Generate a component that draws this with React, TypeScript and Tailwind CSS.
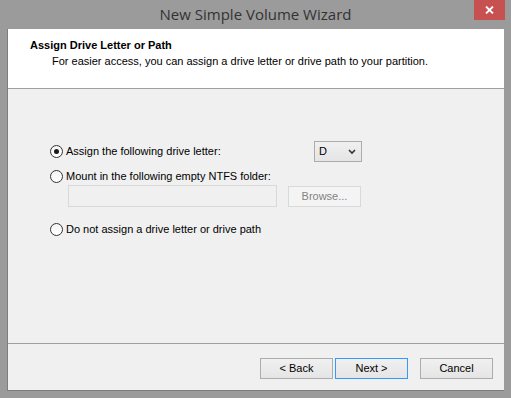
import React from "react";

function Radio({ checked }: { checked?: boolean }) {
  return (
    <span className="flex h-[13px] w-[13px] shrink-0 items-center justify-center rounded-full border border-[#333333] bg-gradient-to-b from-[#f4f4f4] to-[#ffffff]">
      {checked && <span className="h-[5px] w-[5px] rounded-full bg-[#1a1a1a]" />}
    </span>
  );
}

function Button({ label, focused, className }: { label: string; focused?: boolean; className?: string }) {
  return (
    <button
      className={
        "block h-[21px] w-[73px] border bg-gradient-to-b from-[#f0f0f0] to-[#e5e5e5] text-[11px] leading-[13px] text-black " +
        (focused ? "border-[#3399ff] " : "border-[#acacac] ") +
        (className ?? "")
      }
    >
      {label}
    </button>
  );
}

export default function App() {
  return (
    <div className="relative h-[398px] w-[511px] overflow-hidden bg-[#9b9b9b] font-['Liberation_Sans',Arial,sans-serif]">
      {/* title bar */}
      <div className="flex h-[29px] items-center justify-center">
        <span className="font-['Open_Sans',sans-serif] text-[15px] text-[#333333]">New Simple Volume Wizard</span>
      </div>
      <div className="absolute right-[6px] top-0 flex h-[20px] w-[31px] items-center justify-center bg-[#c75050]">
        <svg width="9" height="8" viewBox="0 0 9 8">
          <path d="M1 0.5 L8 7.5 M8 0.5 L1 7.5" stroke="white" strokeWidth="1.8" />
        </svg>
      </div>

      {/* client */}
      <div className="ml-[7px] flex h-[362px] w-[497px] flex-col border-l border-b border-[#7d7d7d] bg-[#f0f0f0]">
        <div className="h-[60px] border-b border-[#a0a0a0] bg-white pl-[22px] pt-[10px]">
          <div className="text-[11px] font-bold leading-[13px] text-black">Assign Drive Letter or Path</div>
          <div className="mt-[3px] pl-[22px] text-[11px] leading-[13px] text-black">
            For easier access, you can assign a drive letter or drive path to your partition.
          </div>
        </div>

        <div className="flex h-[254px] flex-col pl-[42px] pt-[52px] text-[11px] leading-[13px] text-black">
          <div className="flex h-[21px] items-center">
            <div className="flex w-[264px] items-center gap-[3px]">
              <Radio checked />
              <span>Assign the following drive letter:</span>
            </div>
            <div className="flex h-[21px] w-[48px] items-center justify-between border border-[#acacac] bg-gradient-to-b from-[#f0f0f0] to-[#e5e5e5] pl-[4px] pr-[5px]">
              <span>D</span>
              <svg width="8" height="6" viewBox="0 0 8 6">
                <path d="M1 1 L4 4 L7 1" stroke="#333" strokeWidth="1.6" fill="none" />
              </svg>
            </div>
          </div>

          <div className="mt-[8px] flex h-[13px] items-center gap-[3px]">
            <Radio />
            <span>Mount in the following empty NTFS folder:</span>
          </div>

          <div className="ml-[18px] mt-[2px] flex items-start gap-[11px]">
            <div className="h-[22px] w-[209px] border border-[#d9d9d9] bg-[#f0f0f0]" />
            <button className="mt-[1px] block h-[21px] w-[73px] border border-[#d9d9d9] bg-[#f4f4f4] text-[11px] leading-[13px] text-[#838383]">
              Browse...
            </button>
          </div>

          <div className="mt-[16px] flex h-[13px] items-center gap-[3px]">
            <Radio />
            <span>Do not assign a drive letter or drive path</span>
          </div>
        </div>

        <div className="border-t border-[#a0a0a0]" />
        <div className="flex flex-1 items-start justify-end pr-[11px] pt-[14px]">
          <Button label="< Back" />
          <Button label="Next >" focused className="ml-[2px]" />
          <Button label="Cancel" className="ml-[12px]" />
        </div>
      </div>
    </div>
  );
}
